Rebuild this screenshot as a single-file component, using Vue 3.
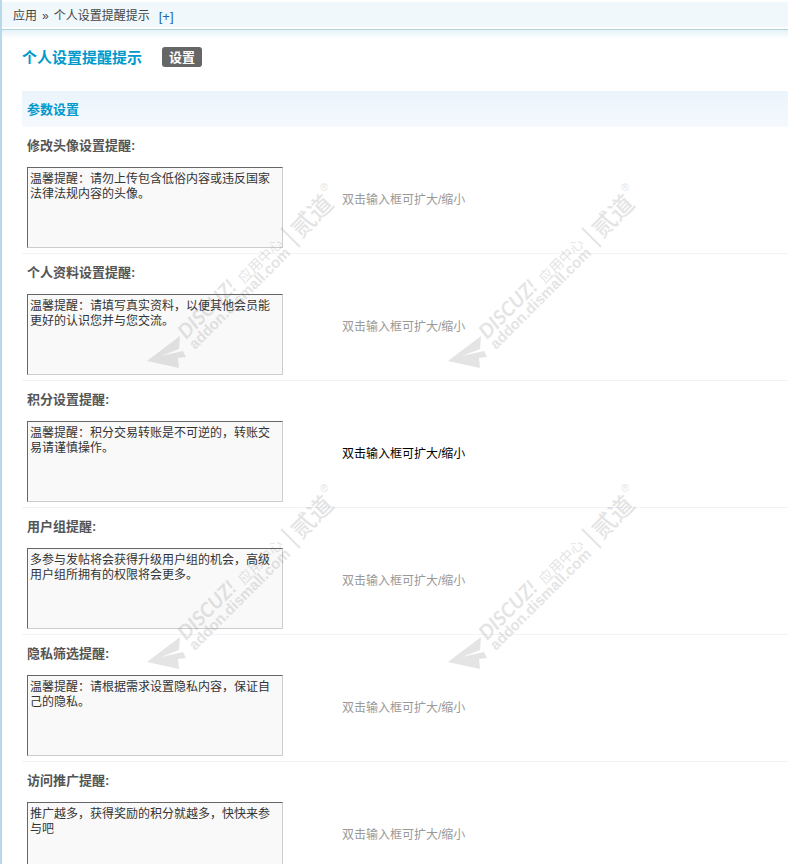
<script setup>
import { ref } from 'vue'

const settings = ref([
  { id: 'avatar', label: '修改头像设置提醒:', text: '温馨提醒：请勿上传包含低俗内容或违反国家法律法规内容的头像。' },
  { id: 'profile', label: '个人资料设置提醒:', text: '温馨提醒：请填写真实资料，以便其他会员能更好的认识您并与您交流。' },
  { id: 'credit', label: '积分设置提醒:', text: '温馨提醒：积分交易转账是不可逆的，转账交易请谨慎操作。', active: true },
  { id: 'group', label: '用户组提醒:', text: '多参与发帖将会获得升级用户组的机会，高级用户组所拥有的权限将会更多。' },
  { id: 'privacy', label: '隐私筛选提醒:', text: '温馨提醒：请根据需求设置隐私内容，保证自己的隐私。' },
  { id: 'promotion', label: '访问推广提醒:', text: '推广越多，获得奖励的积分就越多，快快来参与吧' }
])

const marks = [
  { x: 140, y: 170 },
  { x: 441, y: 170 },
  { x: 140, y: 471 },
  { x: 441, y: 471 }
]

function toggleSize(item) {
  item.expanded = !item.expanded
}
</script>

<template>
  <div class="page">
    <nav class="crumbs">
      <span>应用</span>
      <span class="sep">»</span>
      <span>个人设置提醒提示</span>
      <a class="add" href="#add">[+]</a>
    </nav>

    <main class="content">
      <header class="heading">
        <h1>个人设置提醒提示</h1>
        <a class="tab" href="#settings">设置</a>
      </header>

      <form @submit.prevent>
        <h2>参数设置</h2>
        <section v-for="item in settings" :key="item.id" class="row">
          <label :for="item.id">{{ item.label }}</label>
          <div class="field">
            <textarea
              :id="item.id"
              v-model="item.text"
              :class="{ expanded: item.expanded }"
              spellcheck="false"
              @dblclick="toggleSize(item)"
            ></textarea>
          </div>
          <p class="hint" :class="{ active: item.active }">双击输入框可扩大/缩小</p>
        </section>
      </form>
    </main>

    <svg class="watermark" aria-hidden="true">
      <g v-for="(mark, i) in marks" :key="i" :transform="`translate(${mark.x} ${mark.y})`" fill="#888">
        <path d="M7 191 L40 166 L39 179 L21 186 L43 181 L46 187 L38 188 L39 198 Z" />
        <text class="brand" transform="translate(46 170) rotate(-45)">DISCUZ!</text>
        <text class="center" transform="translate(104 114) rotate(-45)">应用中心</text>
        <text class="domain" transform="translate(55 180) rotate(-45)">addon.dismall.com</text>
        <path d="M141 58 L160 77" stroke="#888" stroke-width="2" />
        <text class="maker" transform="translate(161 69) rotate(-45)">贰道</text>
        <text class="reg" x="180" y="21">®</text>
      </g>
    </svg>
  </div>
</template>

<style>
html,
body {
  height: 100%;
  overflow: hidden;
  background: #fff;
}
#app {
  height: 100%;
}
</style>

<style scoped>
.page {
  position: relative;
  box-sizing: border-box;
  height: 100%;
  overflow: hidden;
  border-left: 2px solid #b9d8e8;
  color: #444;
  font: 12px/15px "Liberation Sans", "Noto Sans CJK SC", sans-serif;
}
.crumbs {
  display: flex;
  align-items: center;
  box-sizing: border-box;
  height: 30px;
  padding: 1px 0 0 11px;
  border-top: 2px solid #fff;
  border-bottom: 1px solid #b0d4da;
  background: linear-gradient(#f0f8fc 25px, #fff 25px);
}
.sep {
  margin: 0 5px;
}
.add {
  margin-left: 9px;
  color: #2366a8;
  font-size: 13px;
  text-decoration: none;
}
.content {
  padding: 0 0 0 20px;
  background: linear-gradient(#e6f3f8, #fff 9px);
}
.heading {
  display: flex;
  align-items: center;
  gap: 20px;
  height: 54px;
  margin-bottom: 7px;
}
h1 {
  margin: 0;
  color: #09c;
  font-size: 15px;
}
.tab {
  padding: 1px 7px 0;
  border-radius: 3px;
  background: #666;
  color: #fff;
  font-size: 13px;
  font-weight: bold;
  line-height: 19px;
  text-decoration: none;
}
h2 {
  margin: 0;
  padding: 1px 0 0 5px;
  background: linear-gradient(#ebf4fb, #f5f9fe);
  color: #09c;
  font-size: 13px;
  line-height: 35px;
}
.row {
  display: grid;
  grid-template-columns: 315px 1fr;
  padding: 1px 0 5px 5px;
  border-bottom: 1px solid #f0f4f8;
}
label {
  grid-column: 1 / -1;
  color: #555;
  font-size: 13px;
  font-weight: bold;
  line-height: 35px;
}
.field {
  display: flex;
  padding-top: 4px;
}
textarea {
  box-sizing: border-box;
  width: 256px;
  height: 81px;
  margin: 0;
  padding: 4px 2px 2px;
  border: 1px solid;
  border-color: #666 #ccc #ccc #666;
  border-radius: 0;
  outline: 0;
  background: #f9f9f9;
  color: #333;
  font: inherit;
  overflow: hidden;
  resize: none;
}
textarea.expanded {
  height: 162px;
}
.hint {
  margin: 0;
  padding-top: 30px;
  color: #999;
}
.hint.active {
  color: #000;
}
.watermark {
  position: absolute;
  inset: 0 0 0 -2px;
  width: calc(100% + 2px);
  height: 100%;
  opacity: 0.22;
  pointer-events: none;
}
.brand {
  font: italic bold 20px Lato, sans-serif;
}
.center {
  font: 14px "Noto Sans CJK SC", sans-serif;
}
.domain {
  font: bold 15px "Liberation Sans", sans-serif;
}
.maker {
  font: 500 24px "Noto Sans CJK SC", sans-serif;
}
.reg {
  font: 11px "Liberation Sans", sans-serif;
}
</style>
